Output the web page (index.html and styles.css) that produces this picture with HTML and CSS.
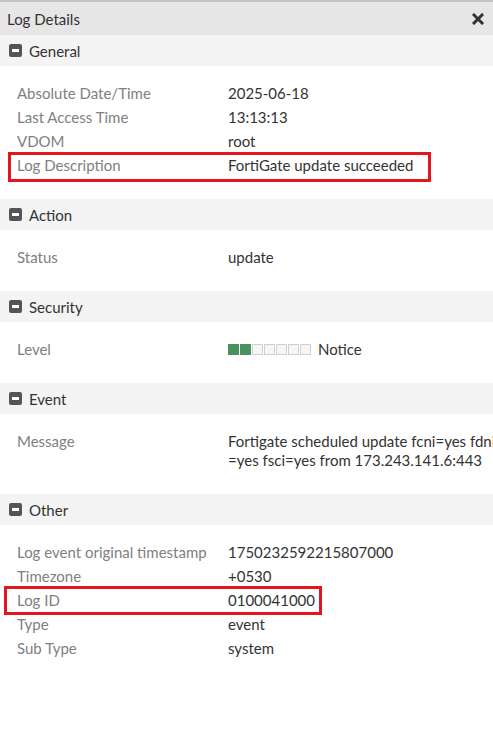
FILE: index.html
```html
<!DOCTYPE html>
<html>
<head>
<meta charset="utf-8">
<link rel="stylesheet" href="styles.css">
</head>
<body>
<div class="panel">
  <div class="titlebar">
    <span class="title">Log Details</span>
    <svg class="close" width="12" height="12" viewBox="0 0 12 12"><path d="M2 2 L10 10 M10 2 L2 10" stroke="#333" stroke-width="3" stroke-linecap="square"/></svg>
  </div>

  <div class="section">
    <div class="sec-head"><span class="toggle"></span>General</div>
    <div class="sec-body">
      <div class="row"><span class="label">Absolute Date/Time</span><span class="value">2025-06-18</span></div>
      <div class="row"><span class="label">Last Access Time</span><span class="value">13:13:13</span></div>
      <div class="row"><span class="label">VDOM</span><span class="value">root</span></div>
      <div class="row"><span class="label">Log Description</span><span class="value">FortiGate update succeeded</span><span class="mark mark-desc"></span></div>
    </div>
  </div>

  <div class="section">
    <div class="sec-head"><span class="toggle"></span>Action</div>
    <div class="sec-body">
      <div class="row"><span class="label">Status</span><span class="value">update</span></div>
    </div>
  </div>

  <div class="section">
    <div class="sec-head"><span class="toggle"></span>Security</div>
    <div class="sec-body">
      <div class="row"><span class="label">Level</span><span class="value level">
        <span class="bars"><i class="on"></i><i class="on"></i><i></i><i></i><i></i><i></i><i></i></span>
        <span>Notice</span></span></div>
    </div>
  </div>

  <div class="section">
    <div class="sec-head"><span class="toggle"></span>Event</div>
    <div class="sec-body">
      <div class="row"><span class="label">Message</span><span class="value msg">Fortigate scheduled update fcni=yes fdni<br>=yes fsci=yes from 173.243.141.6:443</span></div>
    </div>
  </div>

  <div class="section">
    <div class="sec-head"><span class="toggle"></span>Other</div>
    <div class="sec-body">
      <div class="row"><span class="label">Log event original timestamp</span><span class="value">1750232592215807000</span></div>
      <div class="row"><span class="label">Timezone</span><span class="value">+0530</span></div>
      <div class="row"><span class="label">Log ID</span><span class="value">0100041000</span><span class="mark mark-id"></span></div>
      <div class="row"><span class="label">Type</span><span class="value">event</span></div>
      <div class="row"><span class="label">Sub Type</span><span class="value">system</span></div>
    </div>
  </div>
</div>
</body>
</html>
```

FILE: styles.css
```css
html, body {
  margin: 0;
  padding: 0;
  background: #ffffff;
}
body {
  font-family: Lato, "Open Sans", sans-serif;
  font-size: 15px;
  color: #333;
}
.panel {
  width: 493px;
  overflow: hidden;
  border-top: 2px solid #c4c4c4;
}
.titlebar {
  height: 33px;
  background: #e6e6e6;
  display: flex;
  align-items: center;
  justify-content: space-between;
  padding: 0 9px 0 7px;
}
.title {
  font-size: 15px;
  color: #333;
}
.close {
  display: block;
}
.sec-head {
  height: 31px;
  background: #f4f4f4;
  display: flex;
  align-items: center;
  padding-left: 9px;
  color: #333;
}
.toggle {
  width: 13px;
  height: 13px;
  border-radius: 2px;
  background: #555;
  margin-right: 7px;
  position: relative;
  flex: none;
}
.toggle::after {
  content: "";
  position: absolute;
  left: 3px;
  right: 3px;
  top: 5px;
  height: 3px;
  background: #fff;
}
.sec-body {
  padding: 15px 0 22px 0;
}
.row {
  display: grid;
  grid-template-columns: 211px 1fr;
  padding: 3px 0 2px 17px;
  line-height: 19px;
  position: relative;
}
.label {
  color: #808080;
  white-space: nowrap;
}
.value {
  color: #333;
  white-space: nowrap;
}
.level {
  display: flex;
  align-items: center;
}
.bars {
  display: flex;
  gap: 1px;
  margin-right: 7px;
}
.bars i {
  width: 9px;
  height: 9px;
  border: 1px solid #d0d0d0;
  background: #f6f6f6;
}
.bars i.on {
  background: #4a925d;
  border-color: #4a925d;
}
.mark {
  position: absolute;
  border: 3px solid #e3161d;
  box-sizing: border-box;
  pointer-events: none;
}
.mark-desc {
  left: 8px;
  top: -1px;
  width: 423px;
  height: 30px;
}
.mark-id {
  left: 4px;
  top: -2px;
  width: 318px;
  height: 29px;
}
```
